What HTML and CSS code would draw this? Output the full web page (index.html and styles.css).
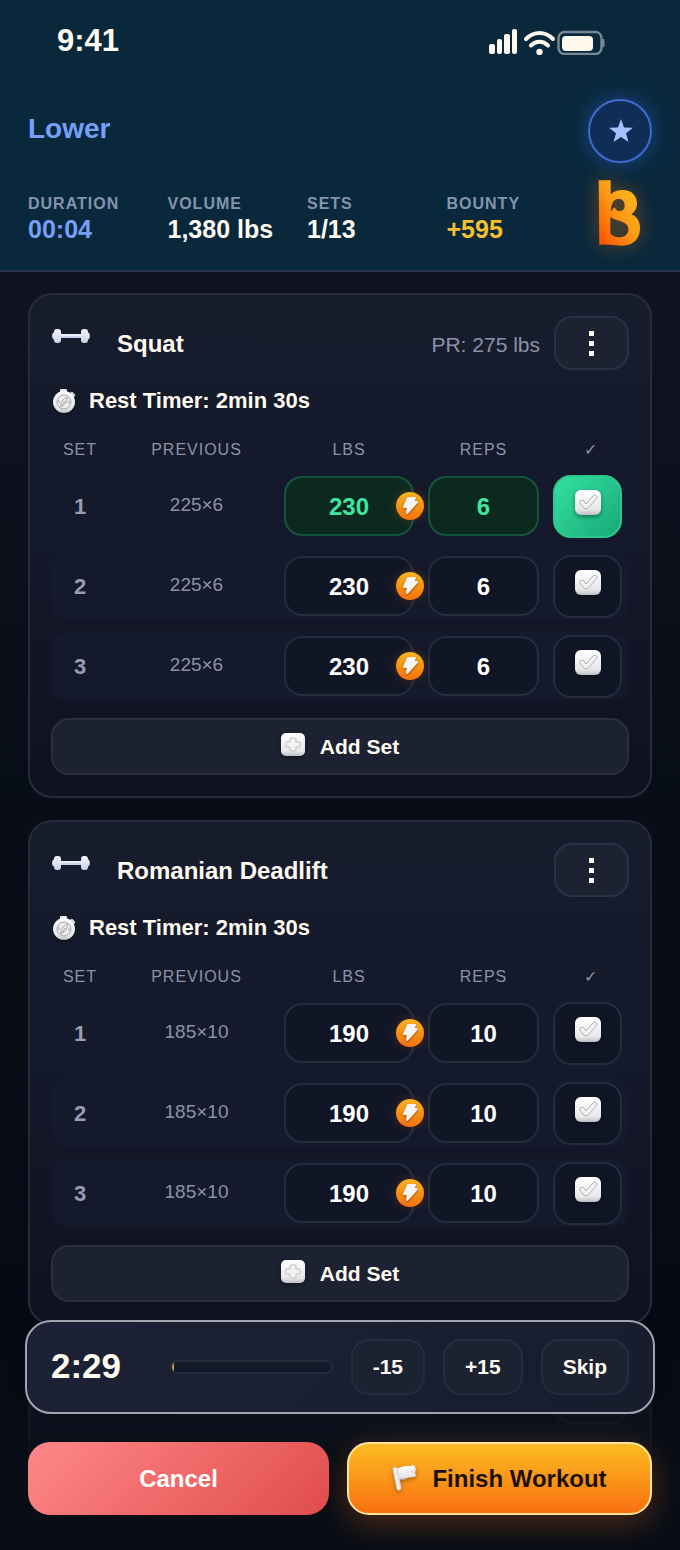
FILE: index.html
```html
<!DOCTYPE html>
<html lang="en">
<head>
    <meta charset="UTF-8">
    <meta name="viewport" content="width=device-width, initial-scale=1.0">
    <title>Workout</title>
    <link rel="stylesheet" href="styles.css">
</head>
<body>
    <!-- Shared icons -->
    <svg class="icon-defs" width="0" height="0" aria-hidden="true">
        <defs>
            <linearGradient id="silver" x1="0" y1="0" x2="0" y2="1">
                <stop offset="0" stop-color="#ffffff"/>
                <stop offset="0.8" stop-color="#e6e6e9"/>
                <stop offset="1" stop-color="#bdbdc3"/>
            </linearGradient>
            <linearGradient id="steel" x1="0" y1="0" x2="0" y2="1">
                <stop offset="0" stop-color="#f4f7ff"/>
                <stop offset="1" stop-color="#c6d2e8"/>
            </linearGradient>
            <linearGradient id="fire" x1="1" y1="0" x2="0" y2="1">
                <stop offset="0" stop-color="#fcc420"/>
                <stop offset="0.5" stop-color="#fd9a16"/>
                <stop offset="1" stop-color="#ff4d00"/>
            </linearGradient>
        </defs>
        <symbol id="icon-dumbbell" viewBox="0 0 38 16">
            <rect x="0" y="5" width="4" height="6" rx="2" fill="#d8c9a8"/>
            <rect x="34" y="5" width="4" height="6" rx="2" fill="#d8b878"/>
            <rect x="6" y="6" width="26" height="4" fill="#c9d5ec"/>
            <rect x="6" y="6" width="26" height="2" fill="#e8effb"/>
            <rect x="1" y="4" width="5" height="8" rx="2" fill="url(#steel)"/>
            <rect x="32" y="4" width="5" height="8" rx="2" fill="url(#steel)"/>
            <rect x="2" y="1" width="7" height="14" rx="3" fill="url(#steel)"/>
            <rect x="29" y="1" width="7" height="14" rx="3" fill="url(#steel)"/>
        </symbol>
        <symbol id="icon-stopwatch" viewBox="0 0 24 26">
            <rect x="8" y="1" width="7" height="5" rx="1" fill="#e9e9ec"/>
            <path d="M17 6l3-2 3 3-2 3z" fill="#d2d2d7" stroke="#d2d2d7" stroke-linejoin="round"/>
            <circle cx="12" cy="14" r="11" fill="url(#silver)"/>
            <circle cx="12" cy="14" r="7" fill="#eeeeef" stroke="#a6a6ac"/>
            <path d="M15 9c1 3-1 7-6 10-1-4 2-8 6-10zM9 19l4-6M7 12v3M17 13v3" fill="none" stroke="#a6a6ac"/>
        </symbol>
        <symbol id="icon-plus" viewBox="0 0 24 24">
            <rect x="0" y="0" width="24" height="23" rx="5" fill="url(#silver)"/>
            <path d="M10 5h4q1 0 1 1v3h3q1 0 1 1v3q0 1-1 1h-3v3q0 1-1 1h-4q-1 0-1-1v-3H6q-1 0-1-1v-3q0-1 1-1h3V6q0-1 1-1z" fill="#f3f3f4" stroke="#bcbcc1"/>
        </symbol>
        <symbol id="icon-check" viewBox="0 0 26 26">
            <rect x="0" y="0" width="26" height="25" rx="6" fill="url(#silver)"/>
            <path d="M5 13c-1-2 2-4 4-2l2 3 7-8c2-2 5 0 4 2l-9 10c-1 1-3 1-4 0z" fill="#f3f3f3" stroke="#b0b0b2" stroke-linejoin="round"/>
        </symbol>
        <symbol id="icon-bolt" viewBox="0 0 28 28">
            <path d="M12 6h7l-2 4h4L11 21l1-6H8z" fill="#f6f5f3" stroke="#f6f5f3" stroke-width="2" stroke-linejoin="round"/>
        </symbol>
        <symbol id="icon-flag" viewBox="0 0 26 28">
            <path d="M4 4c4 1 6-2 10-2 3 0 5 0 8-1l2 4-1 3 1 4c-4 2-6 1-9 2-3 2-5 2-8 1z" fill="url(#silver)"/>
            <path d="M19 8l4-4M20 8l4 3" fill="none" stroke="#cfcfd4"/>
            <path d="M1 5c0-2 3-2 4-1l4 20c0 2-3 3-4 1z" fill="#ececef" stroke="#d8d4cc"/>
        </symbol>
    </svg>

    <div class="app">
        <header class="header">
            <div class="status-bar">
                <span class="time">9:41</span>
                <svg class="status-icons" viewBox="0 0 116 28" role="img" aria-label="Signal, wifi and battery">
                    <g fill="#fff8ec">
                        <rect x="0" y="17" width="6" height="10" rx="2"/>
                        <rect x="8" y="12" width="5" height="15" rx="2"/>
                        <rect x="15" y="7" width="6" height="20" rx="2"/>
                        <rect x="23" y="2" width="5" height="25" rx="2"/>
                        <circle cx="50.500" cy="25" r="3.200"/>
                        <rect x="73" y="9" width="31" height="15" rx="4"/>
                    </g>
                    <path d="M37 12c8-8 19-8 27 0M42 18.500c5-5 12-5 17 0" fill="none" stroke="#fff8ec" stroke-width="4" stroke-linecap="round"/>
                    <rect x="69.500" y="5" width="43" height="22" rx="6" fill="none" stroke="#788893" stroke-width="2.400"/>
                    <path d="M113 12h1.500q1 0 1 1v6q0 1-1 1H113z" fill="#788893"/>
                </svg>
            </div>

            <div class="title-row">
                <h1>Lower</h1>
                <button class="star-btn" type="button" aria-label="Favorite">
                    <svg width="26" height="26" viewBox="0 0 26 26"><path d="M14 1l3 8.500 9 .3-7 5.500 2.500 8.700-7.500-5-7.500 5L9 15.300 2 9.800l9-.3z" fill="#a5c0ff"/></svg>
                </button>
            </div>

            <div class="stats">
                <div class="stat">
                    <span class="stat-label">DURATION</span>
                    <span class="stat-value blue">00:04</span>
                </div>
                <div class="stat">
                    <span class="stat-label">VOLUME</span>
                    <span class="stat-value">1,380 lbs</span>
                </div>
                <div class="stat">
                    <span class="stat-label">SETS</span>
                    <span class="stat-value">1/13</span>
                </div>
                <div class="stat">
                    <span class="stat-label">BOUNTY</span>
                    <span class="stat-value gold">+595</span>
                </div>
                <svg class="logo" viewBox="0 0 129 198" role="img" aria-label="Bounty">
                    <path fill="url(#fire)" fill-rule="evenodd" d="M2 1H38V43C46 34 60 30 74 30C102 30 117 48 117 70C117 84 110 96 100 103C118 110 126 125 126 145C126 178 105 197 72 197C50 197 30 191 4 195ZM38 95C42 90 48 84 50 82C53 88 56 92 62 93C72 94 80 89 80 77C80 65 73 57 61 57C44 57 40 74 38 95ZM37 111V160C42 168 52 172 64 172C79 172 90 164 91 150C92 140 87 131 74 126C60 121 46 118 37 111Z"/>
                </svg>
            </div>
        </header>

        <main class="content">
            <section class="card">
                <div class="card-head">
                    <svg class="dumbbell"><use href="#icon-dumbbell"/></svg>
                    <h2>Squat</h2>
                    <span class="pr">PR: 275 lbs</span>
                    <button class="menu-btn" type="button" aria-label="Squat options"><span></span><span></span><span></span></button>
                </div>
                <div class="rest">
                    <svg class="stopwatch"><use href="#icon-stopwatch"/></svg>
                    <span>Rest Timer: 2min 30s</span>
                </div>
                <table class="sets">
                    <thead>
                        <tr><th>SET</th><th>PREVIOUS</th><th>LBS</th><th>REPS</th><th class="done-col">✓</th></tr>
                    </thead>
                    <tbody>
                        <tr class="done">
                            <td class="num">1</td>
                            <td class="prev">225×6</td>
                            <td class="lbs"><input type="text" value="230" aria-label="Set 1 lbs"><span class="bolt"><svg><use href="#icon-bolt"/></svg></span></td>
                            <td><input type="text" value="6" aria-label="Set 1 reps"></td>
                            <td class="check"><input type="checkbox" aria-label="Set 1 done" checked><svg><use href="#icon-check"/></svg></td>
                        </tr>
                        <tr>
                            <td class="num">2</td>
                            <td class="prev">225×6</td>
                            <td class="lbs"><input type="text" value="230" aria-label="Set 2 lbs"><span class="bolt"><svg><use href="#icon-bolt"/></svg></span></td>
                            <td><input type="text" value="6" aria-label="Set 2 reps"></td>
                            <td class="check"><input type="checkbox" aria-label="Set 2 done"><svg><use href="#icon-check"/></svg></td>
                        </tr>
                        <tr>
                            <td class="num">3</td>
                            <td class="prev">225×6</td>
                            <td class="lbs"><input type="text" value="230" aria-label="Set 3 lbs"><span class="bolt"><svg><use href="#icon-bolt"/></svg></span></td>
                            <td><input type="text" value="6" aria-label="Set 3 reps"></td>
                            <td class="check"><input type="checkbox" aria-label="Set 3 done"><svg><use href="#icon-check"/></svg></td>
                        </tr>
                    </tbody>
                </table>
                <button class="add-btn" type="button"><svg><use href="#icon-plus"/></svg>Add Set</button>
            </section>

            <section class="card">
                <div class="card-head">
                    <svg class="dumbbell"><use href="#icon-dumbbell"/></svg>
                    <h2>Romanian Deadlift</h2>
                    <button class="menu-btn" type="button" aria-label="Romanian Deadlift options"><span></span><span></span><span></span></button>
                </div>
                <div class="rest">
                    <svg class="stopwatch"><use href="#icon-stopwatch"/></svg>
                    <span>Rest Timer: 2min 30s</span>
                </div>
                <table class="sets">
                    <thead>
                        <tr><th>SET</th><th>PREVIOUS</th><th>LBS</th><th>REPS</th><th class="done-col">✓</th></tr>
                    </thead>
                    <tbody>
                        <tr>
                            <td class="num">1</td>
                            <td class="prev">185×10</td>
                            <td class="lbs"><input type="text" value="190" aria-label="Set 1 lbs"><span class="bolt"><svg><use href="#icon-bolt"/></svg></span></td>
                            <td><input type="text" value="10" aria-label="Set 1 reps"></td>
                            <td class="check"><input type="checkbox" aria-label="Set 1 done"><svg><use href="#icon-check"/></svg></td>
                        </tr>
                        <tr>
                            <td class="num">2</td>
                            <td class="prev">185×10</td>
                            <td class="lbs"><input type="text" value="190" aria-label="Set 2 lbs"><span class="bolt"><svg><use href="#icon-bolt"/></svg></span></td>
                            <td><input type="text" value="10" aria-label="Set 2 reps"></td>
                            <td class="check"><input type="checkbox" aria-label="Set 2 done"><svg><use href="#icon-check"/></svg></td>
                        </tr>
                        <tr>
                            <td class="num">3</td>
                            <td class="prev">185×10</td>
                            <td class="lbs"><input type="text" value="190" aria-label="Set 3 lbs"><span class="bolt"><svg><use href="#icon-bolt"/></svg></span></td>
                            <td><input type="text" value="10" aria-label="Set 3 reps"></td>
                            <td class="check"><input type="checkbox" aria-label="Set 3 done"><svg><use href="#icon-check"/></svg></td>
                        </tr>
                    </tbody>
                </table>
                <button class="add-btn" type="button"><svg><use href="#icon-plus"/></svg>Add Set</button>
            </section>

            <section class="card card-next">
                <div class="card-head">
                    <button class="menu-btn" type="button" aria-label="Exercise options"><span></span><span></span><span></span></button>
                </div>
            </section>
        </main>

        <footer class="bottom">
            <div class="timer">
                <span class="timer-time">2:29</span>
                <div class="progress"><div class="progress-fill" style="width: 1%"></div></div>
                <button class="timer-btn" type="button">-15</button>
                <button class="timer-btn" type="button">+15</button>
                <button class="timer-btn" type="button">Skip</button>
            </div>
            <div class="actions">
                <button class="cancel-btn" type="button">Cancel</button>
                <button class="finish-btn" type="button"><svg><use href="#icon-flag"/></svg>Finish Workout</button>
            </div>
        </footer>
    </div>
</body>
</html>
```

FILE: styles.css
```css
* {
    box-sizing: border-box;
}

body {
    margin: 0;
    font-family: "Liberation Sans", Arial, sans-serif;
    background-color: #080c15;
    color: #fffaf0;
}

h1, h2 {
    margin: 0;
}

button, input {
    font-family: inherit;
    margin: 0;
}

button {
    cursor: pointer;
    padding: 0;
}

.icon-defs {
    position: absolute;
}

.app {
    position: relative;
    height: 100vh;
    display: flex;
    flex-direction: column;
    overflow: hidden;
    background: linear-gradient(180deg, #101422 0%, #101422 18%, #080e17 50%, #070a14 88%, #080e17 100%);
}

/* Header */
.header {
    background-color: #09283c;
    border-bottom: 2px solid #263247;
    padding: 0 28px 24px;
}

.status-bar {
    height: 82px;
    padding: 0 47px 0 29px;
    display: flex;
    align-items: center;
    justify-content: space-between;
}

.time {
    font-size: 31px;
    font-weight: bold;
}

.status-icons {
    width: 116px;
    height: 28px;
}

.title-row {
    display: flex;
    align-items: flex-start;
    justify-content: space-between;
    padding-top: 17px;
}

h1 {
    font-size: 28px;
    line-height: 60px;
    color: #779ff8;
}

.star-btn {
    width: 64px;
    height: 64px;
    display: flex;
    align-items: center;
    justify-content: center;
    border: 2px solid #3f6bd0;
    border-radius: 50%;
    background-color: #102e55;
    box-shadow: 0 0 22px rgba(59, 110, 230, 0.45);
}

.stats {
    display: grid;
    grid-template-columns: repeat(4, 1fr) 66px;
    align-items: end;
    margin-top: 17px;
}

.stat {
    display: flex;
    flex-direction: column;
    padding-bottom: 2px;
    white-space: nowrap;
}

.stat-label {
    font-size: 16px;
    line-height: 20px;
    font-weight: bold;
    letter-spacing: 1px;
    color: #8494ad;
}

.stat-value {
    font-size: 25px;
    line-height: 30px;
    font-weight: bold;
}

.stat-value.blue {
    color: #779ff8;
}

.stat-value.gold {
    color: #f5c02c;
}

.logo {
    width: 43px;
    height: 66px;
    justify-self: center;
    overflow: visible;
    filter: drop-shadow(0 0 10px rgba(255, 120, 0, 0.4));
}

/* Exercise cards */
.content {
    flex: 1;
    min-height: 0;
    overflow: hidden;
    padding: 21px 28px 0;
}

.card {
    border: 2px solid #262c3b;
    border-radius: 24px;
    padding: 21px;
    margin-bottom: 22px;
    background: linear-gradient(180deg, #171d2d 0%, #13182a 50%, #0f1220 100%);
}

.card-next {
    height: 500px;
}

.card-head {
    display: flex;
    height: 54px;
}

.dumbbell {
    width: 38px;
    height: 16px;
    margin: 12px 27px 0 1px;
}

h2 {
    font-size: 24px;
    line-height: 56px;
}

.pr {
    margin-left: auto;
    font-size: 21px;
    line-height: 58px;
    color: #8c93a8;
}

.menu-btn {
    width: 75px;
    height: 54px;
    margin-left: auto;
    display: flex;
    flex-direction: column;
    align-items: center;
    justify-content: center;
    gap: 5px;
    border: 2px solid #2b3142;
    border-radius: 18px;
    background-color: #1d2233;
}

.pr + .menu-btn {
    margin-left: 14px;
}

.menu-btn span {
    width: 5px;
    height: 5px;
    background-color: #fffaf0;
}

.rest {
    display: flex;
    align-items: center;
    gap: 13px;
    margin-top: 17px;
    padding-left: 1px;
    font-size: 22px;
    line-height: 28px;
    font-weight: bold;
}

.stopwatch {
    width: 24px;
    height: 26px;
    filter: drop-shadow(0 1px 1px rgba(0, 0, 0, 0.6));
}

.sets {
    display: block;
    margin-top: 24px;
}

.sets thead,
.sets tbody {
    display: block;
}

.sets tr {
    display: grid;
    grid-template-columns: 58px 147fr 130fr 111fr 69px;
    column-gap: 14px;
    align-items: center;
    padding-right: 7px;
}

.sets th {
    padding: 0;
    font-size: 16px;
    line-height: 22px;
    font-weight: normal;
    letter-spacing: 1px;
    color: #8c93a8;
}

.sets .done-col {
    padding-left: 6px;
}

.sets tbody tr {
    height: 68px;
    margin-top: 12px;
    border-radius: 16px;
    background-color: #14192b;
}

.sets tbody tr:first-child {
    margin-top: 11px;
}

.sets td {
    padding: 0;
    text-align: center;
}

.sets .num {
    font-size: 22px;
    font-weight: bold;
    line-height: 28px;
    padding-top: 2px;
    color: #969db4;
}

.sets .prev {
    font-size: 19px;
    line-height: 24px;
    padding-bottom: 3px;
    color: #8c93a8;
}

.sets input[type="text"] {
    display: block;
    width: 100%;
    height: 60px;
    border: 2px solid #262c3c;
    border-radius: 18px;
    padding: 1px 0 0;
    background-color: #111626;
    color: #ffffff;
    font-size: 24px;
    font-weight: bold;
    text-align: center;
}

.sets .done input[type="text"] {
    border-color: #17533d;
    background-color: #0c291f;
    color: #3ee6a2;
}

.lbs {
    position: relative;
}

.bolt {
    position: absolute;
    top: 50%;
    right: -10px;
    width: 28px;
    height: 28px;
    margin-top: -14px;
    border-radius: 50%;
    background: linear-gradient(180deg, #f8b31f, #f5720c);
    box-shadow: 0 0 10px rgba(249, 115, 22, 0.25);
}

.bolt svg {
    display: block;
    width: 28px;
    height: 28px;
    filter: drop-shadow(0 1px 1px rgba(80, 40, 0, 0.6));
}

.check {
    display: grid;
    justify-items: center;
    align-items: center;
}

.check input {
    grid-area: 1 / 1;
    appearance: none;
    width: 100%;
    height: 63px;
    border: 2px solid #252b3b;
    border-radius: 18px;
    background-color: #111626;
    cursor: pointer;
}

.check input:checked {
    border-color: #2bc78d;
    background: linear-gradient(135deg, #34e29f, #19a879);
}

.check svg {
    grid-area: 1 / 1;
    width: 26px;
    height: 26px;
    margin-bottom: 6px;
    pointer-events: none;
    filter: drop-shadow(0 2px 2px rgba(0, 0, 0, 0.4));
}

.add-btn {
    display: flex;
    align-items: center;
    justify-content: center;
    gap: 15px;
    width: 100%;
    height: 57px;
    margin-top: 18px;
    border: 2px solid #2a3041;
    border-radius: 18px;
    background-color: #1d2233;
    color: #fffaf0;
    font-size: 21px;
    font-weight: bold;
}

.add-btn svg {
    width: 24px;
    height: 24px;
    margin-bottom: 3px;
    filter: drop-shadow(0 2px 2px rgba(0, 0, 0, 0.4));
}

/* Rest timer and action buttons over the list */
.bottom {
    position: absolute;
    left: 0;
    right: 0;
    bottom: 0;
    padding: 0 28px 35px;
    background: linear-gradient(180deg, rgba(8, 13, 22, 0) 0%, rgba(8, 13, 22, 0.5) 40%, #080d16 62%, #080d16 100%);
}

.timer {
    display: flex;
    align-items: center;
    gap: 18px;
    margin: 0 -3px 28px;
    padding: 17px 24px;
    border: 2px solid #a2a5af;
    border-radius: 26px;
    background: linear-gradient(135deg, #1d2135, #171d2d);
    box-shadow: 0 4px 16px rgba(0, 0, 0, 0.25);
}

.timer-time {
    width: 101px;
    font-size: 35px;
    line-height: 40px;
    padding-bottom: 2px;
    font-weight: bold;
}

.progress {
    flex: 1;
    height: 14px;
    border: 2px solid #252c3b;
    border-radius: 7px;
    overflow: hidden;
    background-color: #111a28;
}

.progress-fill {
    height: 100%;
    min-width: 2px;
    background-color: #d99a2b;
}

.timer-btn {
    height: 56px;
    padding: 0 20px;
    border: 2px solid #262c3d;
    border-radius: 18px;
    background-color: #1d2233;
    color: #fffaf0;
    font-size: 21px;
    font-weight: bold;
}

.actions {
    display: grid;
    grid-template-columns: 301fr 305fr;
    gap: 18px;
}

.cancel-btn,
.finish-btn {
    height: 73px;
    border-radius: 22px;
    font-size: 24px;
    font-weight: bold;
}

.cancel-btn {
    border: none;
    background: linear-gradient(135deg, #ff8888, #e04c4c);
    color: #ffffff;
}

.finish-btn {
    display: flex;
    align-items: center;
    justify-content: center;
    gap: 14px;
    border: 2px solid #ffe6a0;
    background: linear-gradient(180deg, #fbbc22, #f97010);
    box-shadow: 0 8px 32px rgba(249, 115, 22, 0.3);
    color: #1d1008;
}

.finish-btn svg {
    width: 26px;
    height: 28px;
    margin-bottom: 2px;
    filter: drop-shadow(0 2px 2px rgba(90, 50, 0, 0.5));
}
```
